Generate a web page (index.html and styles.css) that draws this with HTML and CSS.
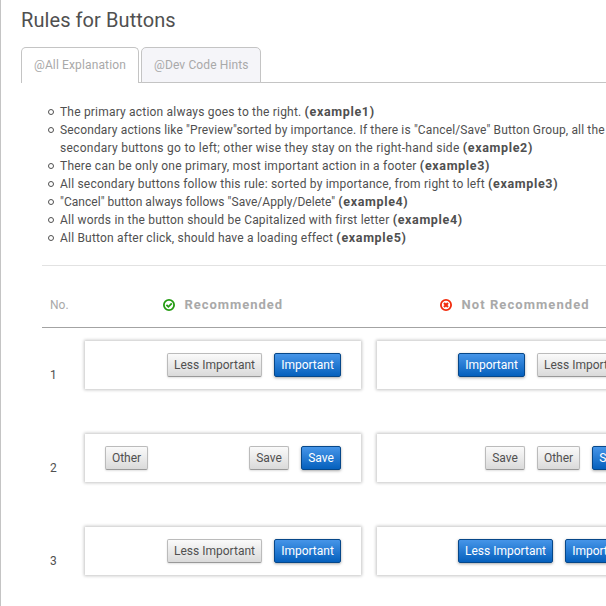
FILE: index.html
```html
<!DOCTYPE html>
<html lang="en">
<head>
<meta charset="utf-8">
<title>Rules for Buttons</title>
<link rel="stylesheet" href="styles.css">
</head>
<body>
<main class="page">
  <h1>Rules for Buttons</h1>
  <nav class="tabs">
    <a class="tab active"><span>@All Explanation</span></a>
    <a class="tab"><span>@Dev Code Hints</span></a>
  </nav>
  <ul class="rules">
    <li class="r1">The primary action always goes to the right. <b>(example1)</b></li>
    <li class="r2">Secondary actions like "Preview"sorted by importance. If there is "Cancel/Save" Button Group, all the<br><span class="r2b">secondary buttons go to left; other wise they stay on the right-hand side <b>(example2)</b></span></li>
    <li class="r3">There can be only one primary, most important action in a footer <b>(example3)</b></li>
    <li class="r4">All secondary buttons follow this rule: sorted by importance, from right to left <b>(example3)</b></li>
    <li class="r5">"Cancel" button always follows "Save/Apply/Delete" <b>(example4)</b></li>
    <li class="r6">All words in the button should be Capitalized with first letter <b>(example4)</b></li>
    <li class="r7">All Button after click, should have a loading effect <b>(example5)</b></li>
  </ul>
  <section class="examples">
    <div class="row head">
      <span class="no">No.</span>
      <div class="col"><svg class="icon ok" viewBox="0 0 12 12"><circle cx="6" cy="6" r="5.1"/><path d="M3.4 5.8l2 2 3.4-3.5"/></svg><strong>Recommended</strong></div>
      <div class="col"><svg class="icon bad" viewBox="0 0 12 12"><circle cx="6" cy="6" r="5.1"/><path d="M4 4l4 4M8 4l-4 4"/></svg><strong class="not">Not Recommended</strong></div>
    </div>
    <div class="row">
      <span class="no">1</span>
      <div class="card"><button class="btn less">Less Important</button><button class="btn imp primary">Important</button></div>
      <div class="card"><button class="btn imp primary">Important</button><button class="btn less">Less Important</button></div>
    </div>
    <div class="row">
      <span class="no">2</span>
      <div class="card"><button class="btn other start">Other</button><button class="btn save">Save</button><button class="btn save primary">Save</button></div>
      <div class="card"><button class="btn save">Save</button><button class="btn other">Other</button><button class="btn save primary">Save</button></div>
    </div>
    <div class="row">
      <span class="no">3</span>
      <div class="card"><button class="btn less">Less Important</button><button class="btn imp primary">Important</button></div>
      <div class="card"><button class="btn less primary">Less Important</button><button class="btn imp primary">Important</button></div>
    </div>
  </section>
</main>
</body>
</html>
```
FILE: styles.css
```css
* { box-sizing: border-box; }
html, body { overflow: hidden; }
body { margin: 0; background: #fff; color: #505050; font: 12px/18px Roboto, "Open Sans", sans-serif; }
.page { width: 680px; height: 606px; padding: 7px 0 0 20px; border-left: 1px solid #c4c4c4; }
h1 { margin: 0; height: 40px; font-size: 20px; line-height: 26px; font-weight: 400; letter-spacing: .08px; }
.tabs { display: flex; gap: 2px; height: 36px; box-shadow: inset 0 -1px #c4c4c4; }
.tab { width: 120px; height: 36px; padding-left: 12px; line-height: 34px; color: #a9a9a9; letter-spacing: .13px; background: #f5f5f9; border: 1px solid #c4c4c4; border-radius: 5px 5px 0 0; white-space: nowrap; }
.tab.active { width: 118px; background: #fff; border-bottom: 0; }
.rules { margin: 20px 0 0; padding: 0 0 0 39px; height: 162px; list-style: none; white-space: nowrap; letter-spacing: .2px; }
.rules li { height: 18px; }
.rules li.r2 { height: 36px; }
.rules li::before { content: ""; float: left; box-sizing: border-box; width: 6px; height: 6px; margin: 6px 0 0 -12px; border: 1px solid #505050; border-radius: 50%; }
.rules b { font-size: 12.5px; font-weight: 700; letter-spacing: .65px; }
.r2 { letter-spacing: .14px; }
.r2b { letter-spacing: .27px; }
.r3 { letter-spacing: .24px; }
.r5 { letter-spacing: .04px; }
.examples { width: 640px; margin-left: 21px; border-top: 1px solid #e2e2e2; }
.row { display: grid; grid-template-columns: 43px 276px 275px; height: 48px; margin-bottom: 45px; align-items: start; }
.row .no { padding: 25px 0 0 8px; }
.row > :nth-child(3) { margin-left: 16px; width: 275px; }
.row.head { height: 62px; margin-bottom: 13px; color: #a9a9a9; border-bottom: 1px solid #a3a3a3; align-items: center; }
.head .no { padding: 17px 0 0 8px; }
.head .col { display: flex; justify-content: center; align-items: center; padding-top: 17px; }
.head strong { font-size: 13px; width: 99px; font-weight: 700; white-space: nowrap; letter-spacing: .95px; }
.head strong.not { width: 128px; letter-spacing: 1.07px; }
.icon { width: 12px; height: 12px; margin-right: 10px; fill: none; stroke-width: 1.8; }
.ok { stroke: #259c13; }
.bad { stroke: #f22b0c; }
.bad path { stroke-width: 2.2; }
.card { display: flex; justify-content: flex-end; gap: 12px; height: 48px; padding: 12px 20px; background: #fff; box-shadow: 0 0 3px 1px rgba(0,0,0,.23); }
.btn { flex: none; height: 24px; padding: 0; color: #505050; font: inherit; line-height: 22px; white-space: nowrap; border: 1px solid #bbb; border-bottom-color: #999; border-radius: 2px; background: linear-gradient(#fafafa, #dadada); box-shadow: 0 1px 2px rgba(0,0,0,.12); }
.primary { color: #fff; border-color: #064789; background: linear-gradient(#4695e8, #0560bd); box-shadow: 0 1px 3px rgba(0,0,0,.35); }
.less { width: 95px; }
.imp { width: 67px; }
.other { width: 43px; }
.save { width: 40px; }
.start { margin-right: auto; }
```
